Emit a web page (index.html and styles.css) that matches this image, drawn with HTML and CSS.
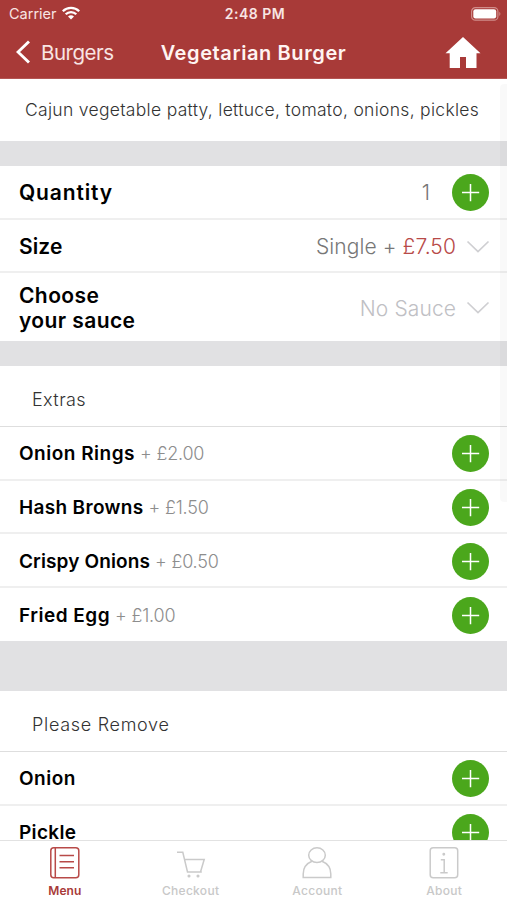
FILE: index.html
```html
<!DOCTYPE html>
<html lang="en">
<head>
<meta charset="utf-8">
<title>Vegetarian Burger</title>
<link rel="stylesheet" href="styles.css">
</head>
<body>
<svg class="defs" width="0" height="0">
  <symbol id="plus" viewBox="0 0 37 37"><circle cx="18.5" cy="18.5" r="18.5" fill="#4ba71c"/><path d="M18.5 10v17.200M10 18.500h17.200" stroke="#fff" stroke-width="1.500"/></symbol>
  <symbol id="down" viewBox="0 0 24 14"><path d="M1.500 1.500 12 11.500 22.500 1.500" fill="none" stroke="#cfcfd2" stroke-width="1.700"/></symbol>
</svg>
<div class="app">
  <header class="header">
    <div class="status">
      <div class="carrier"><span>Carrier</span>
        <svg width="18" height="14" viewBox="0 0 18 14" fill="none" stroke="#fff" stroke-width="2.300"><path d="M.8 5.300a11.600 11.600 0 0 1 16.400 0"/><path d="M3.700 8.300a7.500 7.500 0 0 1 10.600 0"/><path d="M9 13.500 6 10.600a4.300 4.300 0 0 1 6 0z" fill="#fff" stroke="none"/></svg>
      </div>
      <div class="time">2:48 PM</div>
      <svg class="battery" width="31" height="14" viewBox="0 0 31 14"><rect x=".6" y=".6" width="26.300" height="12.600" rx="3.800" fill="none" stroke="#d08d8a" stroke-width="1.200"/><rect x="2.300" y="2.300" width="22.900" height="9.200" rx="2.200" fill="#fff"/><path d="M28.300 4.800q2.200 2.100 0 4.200z" fill="#d08d8a"/></svg>
    </div>
    <nav class="nav">
      <div class="back"><svg width="15" height="24" viewBox="0 0 15 24"><path d="M13 1.500 2 12l11 10.500" fill="none" stroke="#fff" stroke-width="2.900"/></svg><span>Burgers</span></div>
      <h1 class="title">Vegetarian Burger</h1>
      <svg class="home" width="36" height="31" viewBox="0 0 36 31"><path d="M18 0 35.500 16.300H31.500V31H21V20h-6v11H4.700V16.300H.5z" fill="#fff"/></svg>
    </nav>
  </header>
  <main class="content">
    <p class="desc">Cajun vegetable patty, lettuce, tomato, onions, pickles</p>
    <div class="band"></div>
    <div class="row option"><span class="name quantity">Quantity</span><span class="value count">1</span><svg class="plus"><use href="#plus"/></svg></div>
    <div class="row option"><span class="name size">Size</span><span class="value">Single + <b>£7.50</b></span><svg class="down"><use href="#down"/></svg></div>
    <div class="row option tall"><span class="name">Choose<br>your sauce</span><span class="value none">No Sauce</span><svg class="down"><use href="#down"/></svg></div>
    <div class="band"></div>
    <h2 class="section">Extras</h2>
    <div class="row"><span class="item">Onion Rings</span><span class="price">+ £2.00</span><svg class="plus"><use href="#plus"/></svg></div>
    <div class="row"><span class="item mid">Hash Browns</span><span class="price">+ £1.50</span><svg class="plus"><use href="#plus"/></svg></div>
    <div class="row"><span class="item tight">Crispy Onions</span><span class="price">+ £0.50</span><svg class="plus"><use href="#plus"/></svg></div>
    <div class="row last"><span class="item">Fried Egg</span><span class="price">+ £1.00</span><svg class="plus"><use href="#plus"/></svg></div>
    <div class="band wide"></div>
    <h2 class="section remove">Please Remove</h2>
    <div class="row"><span class="item">Onion</span><svg class="plus"><use href="#plus"/></svg></div>
    <div class="row"><span class="item mid">Pickle</span><svg class="plus"><use href="#plus"/></svg></div>
    <div class="scrollbar"></div>
  </main>
  <nav class="tabs">
    <div class="tab active"><svg width="30" height="32" viewBox="0 0 30 32"><rect x=".8" y=".8" width="28" height="30" rx="3"/><path d="M5.300 1v30M9.500 8.500h14.500M9.500 14.700h14.500M9.500 20.700h14.500"/></svg><span>Menu</span></div>
    <div class="tab"><svg width="30" height="32" viewBox="0 0 30 32"><path d="M1 5.300h5.800L11.500 25h14.300M8.500 12.500h19.700l-3.700 12.500"/><circle cx="13" cy="29" r=".8"/><circle cx="22" cy="29" r=".8"/></svg><span>Checkout</span></div>
    <div class="tab"><svg width="30" height="32" viewBox="0 0 30 32"><ellipse cx="15" cy="8.200" rx="8.300" ry="7.400"/><path d="M10 14.300C4.500 16.500 1.200 21 1.200 27v3.500h27.600V27c0-6-3.300-10.500-8.800-12.700"/></svg><span>Account</span></div>
    <div class="tab"><svg width="30" height="32" viewBox="0 0 30 32"><rect x="1.200" y=".8" width="27.500" height="30" rx="3"/><path d="M11.800 12.800h3.400v13M11.300 25.800h7.400"/><circle cx="14.800" cy="7.300" r=".7"/></svg><span>About</span></div>
  </nav>
</div>
</body>
</html>
```
FILE: styles.css
```css
* { box-sizing: border-box; }
body { margin: 0; font-family: Inter, "Liberation Sans", sans-serif; color: #000; background: #fff; }
.defs { position: absolute; }
svg { display: block; flex: none; }
.app { width: 507px; height: 900px; display: flex; flex-direction: column; overflow: hidden; }

.header { flex: none; height: 79px; background: #a83a38; color: #fff; border-bottom: 1px solid #b45553; }
.status { display: grid; grid-template-columns: 1fr auto 1fr; align-items: center; height: 27px; padding: 0 6px 0 9px; }
.carrier { display: flex; align-items: center; gap: 5px; font-size: 14.5px; color: #f8e5e3; }
.carrier svg { margin-top: -2px; }
.time { font-size: 14px; font-weight: 600; letter-spacing: .5px; color: #f8e5e3; }
.battery { justify-self: end; margin-right: -1px; }
.nav { display: grid; grid-template-columns: 1fr auto 1fr; align-items: center; height: 50px; padding: 0 26px 0 16px; }
.back { display: flex; align-items: center; gap: 10px; font-size: 20.500px; letter-spacing: -.5px; color: #f8e5e3; }
.title { margin: 1px -5px 0 5px; font-size: 20px; font-weight: 600; letter-spacing: .6px; color: #fff4f2; }
.home { justify-self: end; }

.content { position: relative; flex: 1; min-height: 0; overflow: hidden; }
.desc { margin: 0; height: 62px; line-height: 61px; padding-left: 25px; font-size: 17.5px; font-weight: 300; letter-spacing: .3px; color: #333; white-space: nowrap; }
.band { height: 25px; background: #e1e1e3; }
.band.wide { height: 50px; }
.row { display: flex; align-items: center; height: 53.700px; padding: 2px 18px 0 19px; border-bottom: 2px solid #efefef; }
.row.last { height: 53px; border-bottom: 0; padding-top: 1px; }
.row.tall { height: 67.600px; border-bottom: 0; }
.name { flex: 1; font-size: 21px; font-weight: 600; line-height: 25.500px; letter-spacing: .4px; }
.quantity { letter-spacing: .85px; }
.size { letter-spacing: .1px; }
.value { font-size: 21px; font-weight: 300; letter-spacing: .1px; color: #777; margin-right: 10px; }
.value b { font-weight: 300; color: #b84a48; }
.value.none { color: #c0c0c4; }
.value.count { margin-right: 22px; }
.plus { width: 37px; height: 37px; margin-left: auto; }
.down { width: 24px; height: 14px; margin-right: -1px; }
.section { margin: 0; height: 61px; line-height: 67px; padding-left: 32px; border-bottom: 1px solid #dedede; font-size: 18px; font-weight: 300; letter-spacing: .4px; color: #333; }
.remove { letter-spacing: .7px; }
.item { font-size: 19px; font-weight: 600; letter-spacing: .5px; }
.item.mid { letter-spacing: .33px; }
.item.tight { letter-spacing: .12px; }
.price { margin-left: 5px; font-size: 18px; font-weight: 300; letter-spacing: -.2px; color: #8d8d8d; }
.scrollbar { position: absolute; top: 5px; right: 0; width: 7px; height: 418px; border-radius: 4px 0 0 4px; background: rgba(0, 0, 0, .025); }

.tabs { flex: none; display: grid; grid-template-columns: repeat(4, 1fr); height: 60px; background: #fff; border-top: 1px solid #e2e2e2; }
.tab { display: flex; flex-direction: column; align-items: center; padding: 6px 0 0 1px; font-size: 12px; font-weight: 500; line-height: 15px; letter-spacing: .3px; color: #c8c8c8; }
.tab span { margin-top: 4px; }
.tab svg { fill: none; stroke: #cacaca; stroke-width: 1.500; }
.active { padding-left: 3px; color: #a83a38; font-weight: 600; letter-spacing: .1px; }
.active svg { stroke: #b84a48; }
```
